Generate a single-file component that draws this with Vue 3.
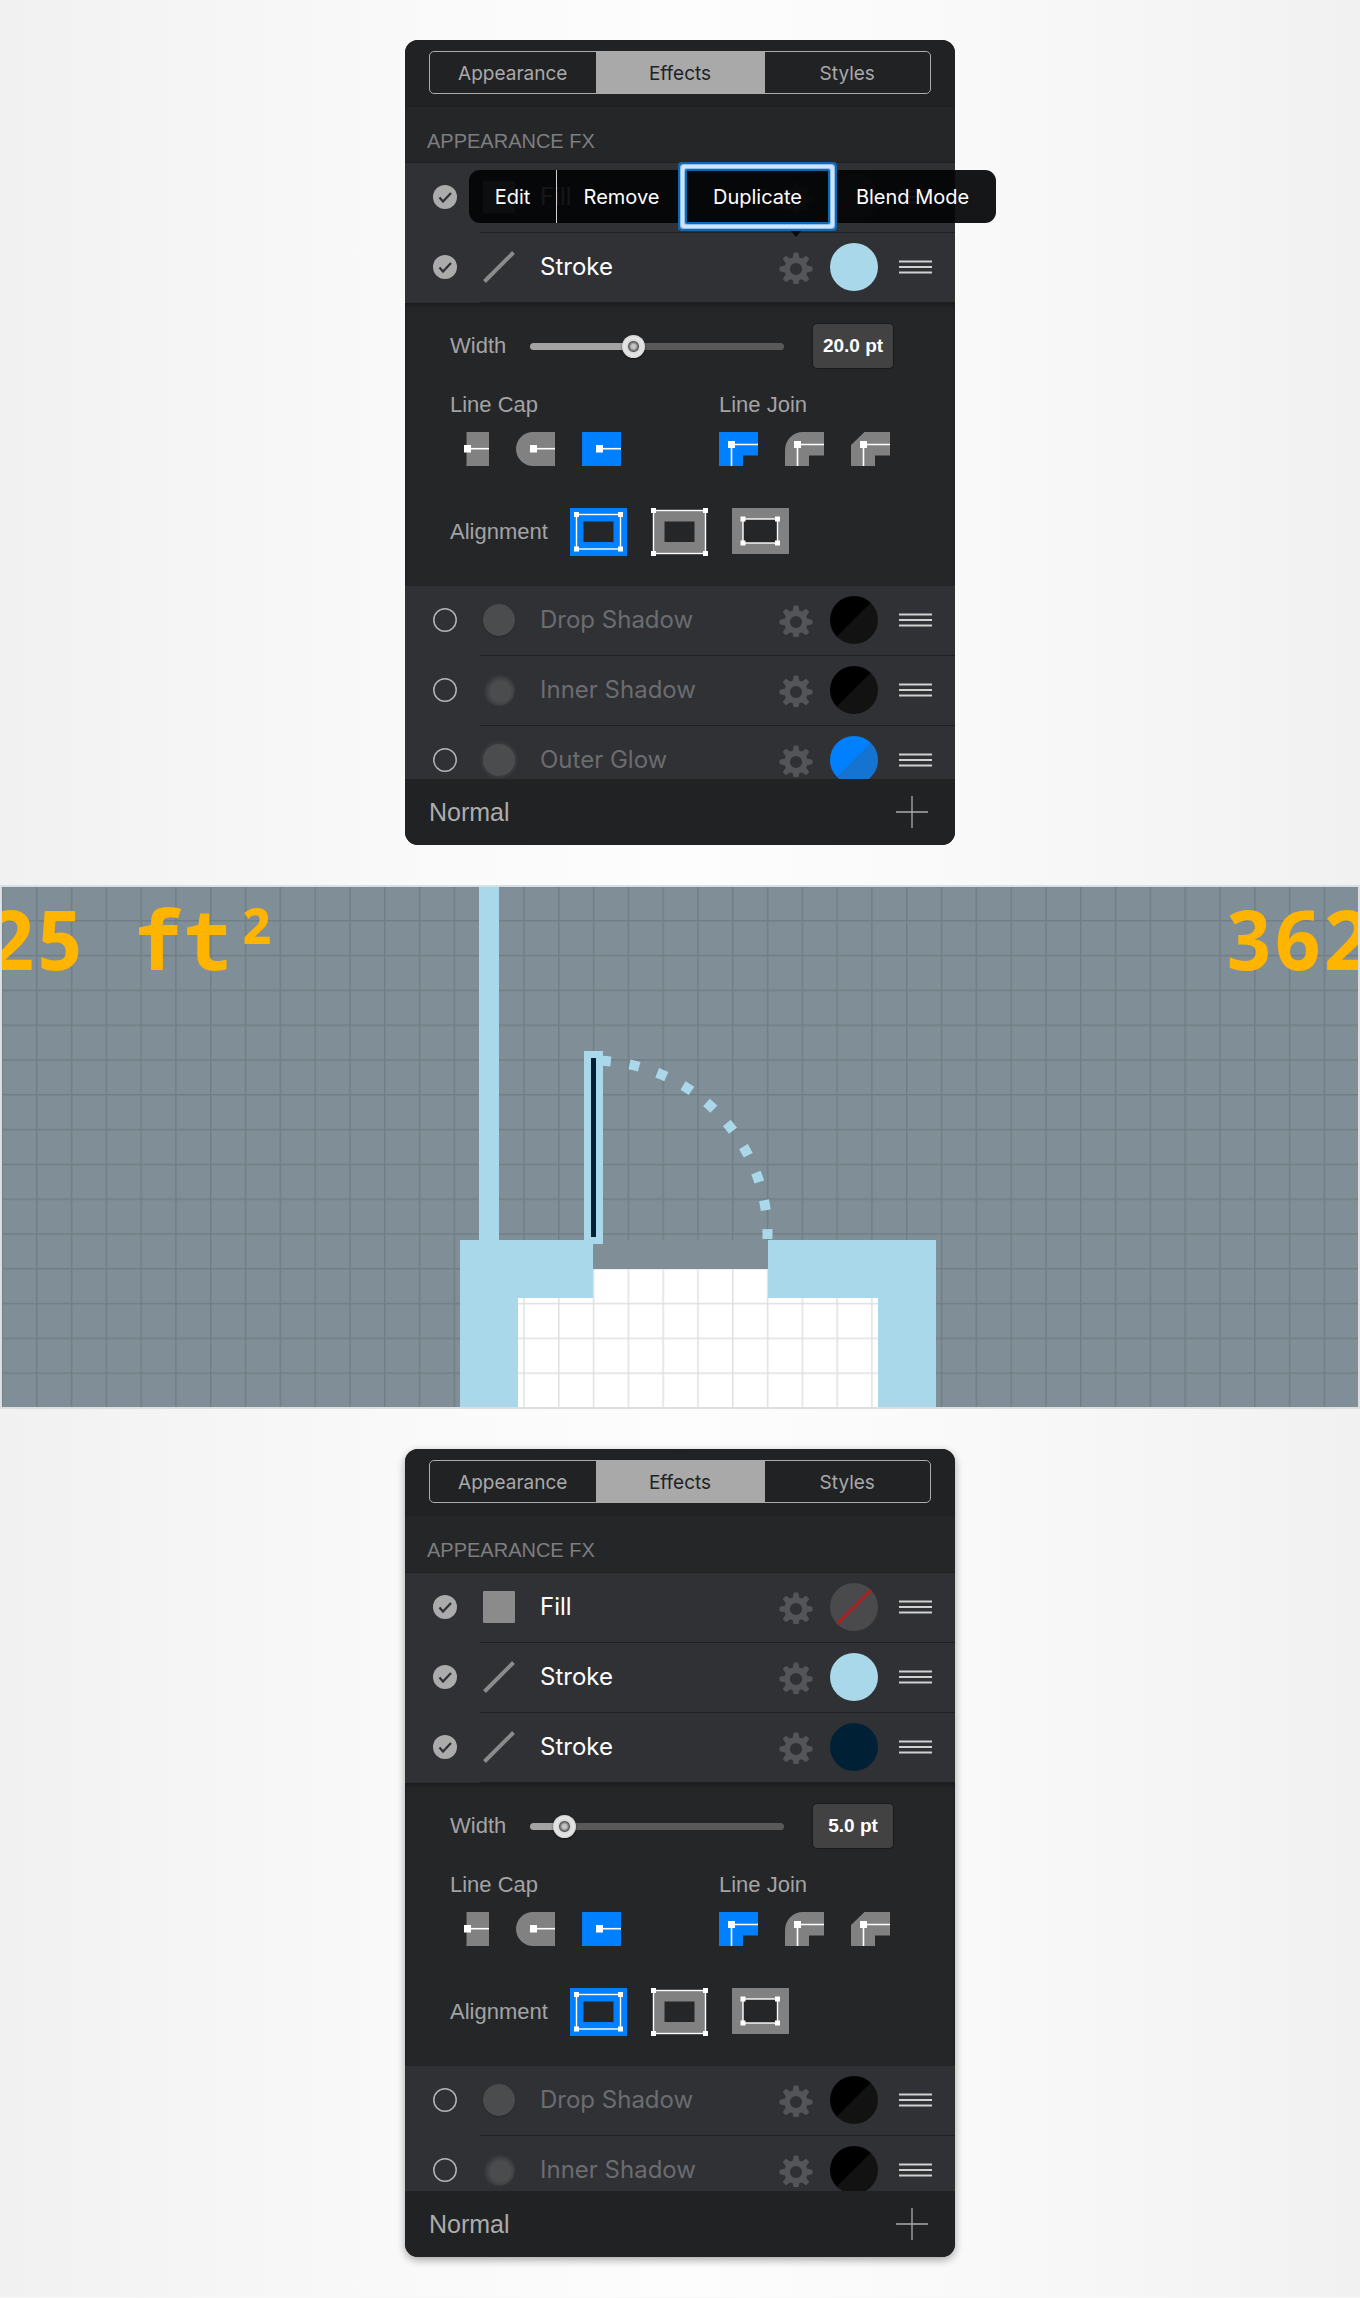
<script setup>
import { reactive } from 'vue'

const fill = { name: 'Fill', icon: 'square', on: true, swatch: 'none' }
const stroke = { name: 'Stroke', icon: 'line', on: true, swatch: 'sky' }
const darkStroke = { name: 'Stroke', icon: 'line', on: true, swatch: 'navy' }
const dropShadow = { name: 'Drop Shadow', icon: 'drop', on: false, swatch: 'black' }
const innerShadow = { name: 'Inner Shadow', icon: 'inner', on: false, swatch: 'black' }
const outerGlow = { name: 'Outer Glow', icon: 'glow', on: false, swatch: 'blue' }

const panels = reactive([
  {
    id: 'a',
    menu: true,
    viewport: 616,
    width: '20.0 pt',
    slider: 40,
    cap: 'square',
    join: 'miter',
    align: 'center',
    before: [{ ...fill }, { ...stroke }],
    after: [{ ...dropShadow }, { ...innerShadow }, { ...outerGlow }],
  },
  {
    id: 'b',
    menu: false,
    viewport: 618,
    width: '5.0 pt',
    slider: 10,
    cap: 'square',
    join: 'miter',
    align: 'center',
    before: [{ ...fill }, { ...stroke }, { ...darkStroke }],
    after: [{ ...dropShadow }, { ...innerShadow }],
  },
])

const tabs = ['Appearance', 'Effects', 'Styles']
const teeth = [0, 45, 90, 135, 180, 225, 270, 315]

const caps = [
  { id: 'butt', d: 'M16.5 0H39V34H16.5Z' },
  { id: 'round', d: 'M17 0H39V34H17A17 17 0 0 1 17 0Z' },
  { id: 'square', d: 'M0 0H39V34H0Z' },
]
const joins = [
  { id: 'miter', d: 'M0 0H39V23.5H24V34H0Z' },
  { id: 'round', d: 'M18 0H39V23.5H24V34H0V18A18 18 0 0 1 18 0Z' },
  { id: 'bevel', d: 'M13.5 0H39V23.5H24V34H0V13Z' },
]
const aligns = [
  { id: 'center', d: 'M0 0H57V48H0ZM13.5 13.5V34H43.5V13.5Z', x1: 6.5, y1: 6.5, x2: 50.5, y2: 41 },
  { id: 'inside', d: 'M2.5 2H54.5V45.5H2.5ZM13.5 13.5V34H43.5V13.5Z', x1: 2.5, y1: 2.5, x2: 54.5, y2: 45.5 },
  { id: 'outside', d: 'M0 0H57V46H0ZM11 11V35H45.5V11Z', x1: 11, y1: 11, x2: 45.5, y2: 35 },
]
</script>

<template>
  <main class="page">
    <template v-for="p in panels" :key="p.id">
      <section v-if="p.id === 'b'" class="plan" aria-label="Floor plan">
        <svg class="plan-art" viewBox="0 0 1356 520" preserveAspectRatio="xMidYMid slice">
          <defs>
            <pattern id="grid" x="34" y="33" width="34.8" height="34.8" patternUnits="userSpaceOnUse">
              <path d="M.75 0V34.8M0 .75H34.8" stroke="#000" stroke-opacity=".12" stroke-width="1.5" fill="none" />
            </pattern>
          </defs>
          <rect width="1356" height="520" fill="#808f97" />
          <rect x="591" y="382" width="175" height="40" fill="#fff" />
          <rect x="516" y="411" width="360" height="109" fill="#fff" />
          <rect width="1356" height="520" fill="url(#grid)" />
          <rect x="591" y="353" width="175" height="29" fill="#808f97" />
          <g fill="#a9d8eb">
            <rect x="477" width="20" height="354" />
            <path d="M458 353H591V411H516V520H458Z" />
            <path d="M766 353H934V520H876V411H766Z" />
            <rect x="582" y="164" width="19" height="193" />
          </g>
          <path d="M765.5 352V348A174.5 174.5 0 0 0 591 173.5" fill="none" stroke="#a9d8eb" stroke-width="10" stroke-dasharray="10 18.9" />
          <rect x="589" y="171" width="5" height="179" fill="#002135" />
          <g class="area">
            <text x="-16" y="83">25 ft<tspan dy="8">²</tspan></text>
            <text x="1222" y="83">362</text>
          </g>
        </svg>
      </section>

      <section class="panel-wrap">
        <div class="panel" :class="{ raised: !p.menu }">
          <header class="top">
            <div class="tabs">
              <button v-for="t in tabs" :key="t" type="button" class="tab" :class="{ active: t === 'Effects' }">{{ t }}</button>
            </div>
          </header>
          <h2 class="heading">APPEARANCE FX</h2>

          <div class="list" :style="{ height: p.viewport + 'px' }">
            <template v-for="group in ['before', 'after']" :key="group">
              <div v-for="(r, i) in p[group]" :key="i" class="row" :class="{ off: !r.on }">
                <label class="check">
                  <input v-model="r.on" type="checkbox" :aria-label="'Enable ' + r.name" />
                  <svg viewBox="0 0 24 24" width="24" height="24">
                    <template v-if="r.on">
                      <circle cx="12" cy="12" r="12" fill="#ababac" />
                      <path d="M6.5 12.5L10 16.5L18 8" fill="none" stroke="#303135" stroke-width="2.2" />
                    </template>
                    <circle v-else cx="12" cy="12" r="11.2" fill="none" stroke="#b5b5b6" stroke-width="1.5" />
                  </svg>
                </label>
                <div class="row-body">
                  <span class="kind" :class="r.icon">
                    <svg v-if="r.icon === 'line'" viewBox="0 0 32 32" width="32" height="32">
                      <path d="M1.5 30.5L30.5 1.5" stroke="#8b8b8c" stroke-width="4" />
                    </svg>
                  </span>
                  <span class="name">{{ r.name }}</span>
                  <button type="button" class="gear" :aria-label="r.name + ' settings'">
                    <svg viewBox="-17 -19 34 34" width="34" height="34">
                      <circle r="8.9" fill="none" stroke="#545558" stroke-width="5.6" />
                      <path v-for="a in teeth" :key="a" d="M-1.8 -16H1.8L2.8 -11H-2.8Z" :transform="`rotate(${a})`" fill="#545558" stroke="#545558" stroke-linejoin="round" />
                    </svg>
                  </button>
                  <button type="button" class="swatch" :class="r.swatch" :aria-label="r.name + ' colour'">
                    <svg v-if="r.swatch === 'none'" viewBox="0 0 48 48" width="48" height="48">
                      <path d="M7 41L41 7" stroke="#b11e1f" stroke-width="3" />
                    </svg>
                  </button>
                  <button type="button" class="handle" :aria-label="'Move ' + r.name">
                    <svg viewBox="0 0 33 14" width="33" height="14">
                      <path d="M0 1.5H33M0 7H33M0 12.5H33" stroke="#d0d0d1" stroke-width="2.2" />
                    </svg>
                  </button>
                </div>
              </div>

              <div v-if="group === 'before'" class="editor">
                <div class="width-row">
                  <label class="lbl width-lbl" :for="'width-' + p.id">Width</label>
                  <input
                    :id="'width-' + p.id"
                    v-model="p.slider"
                    class="slider"
                    type="range"
                    min="0"
                    max="100"
                    :style="{ '--fill': p.slider + '%' }"
                  />
                  <input v-model="p.width" class="value" type="text" aria-label="Width value" />
                </div>
                <div class="shape-row">
                  <fieldset class="caps">
                    <legend class="lbl">Line Cap</legend>
                    <div class="choices">
                      <label v-for="c in caps" :key="c.id" class="choice">
                        <input v-model="p.cap" type="radio" :name="'cap-' + p.id" :value="c.id" :aria-label="c.id" />
                        <svg viewBox="0 0 39 34" width="39" height="34">
                          <path class="shape" :d="c.d" />
                          <path d="M18 16.7H39" stroke="#fff" stroke-width="1.6" />
                          <rect x="14" y="13" width="7" height="7.5" fill="#fff" />
                        </svg>
                      </label>
                    </div>
                  </fieldset>
                  <fieldset>
                    <legend class="lbl">Line Join</legend>
                    <div class="choices">
                      <label v-for="j in joins" :key="j.id" class="choice">
                        <input v-model="p.join" type="radio" :name="'join-' + p.id" :value="j.id" :aria-label="j.id" />
                        <svg viewBox="0 0 39 34" width="39" height="34">
                          <path class="shape" :d="j.d" />
                          <path d="M39 12.5H12.5V34" fill="none" stroke="#fff" stroke-width="1.6" />
                          <rect x="9" y="9" width="7" height="7" fill="#fff" />
                        </svg>
                      </label>
                    </div>
                  </fieldset>
                </div>
                <div class="align-row" role="radiogroup" :aria-labelledby="'align-' + p.id">
                  <span :id="'align-' + p.id" class="lbl align-lbl">Alignment</span>
                  <label v-for="a in aligns" :key="a.id" class="choice">
                    <input v-model="p.align" type="radio" :name="'align-' + p.id" :value="a.id" :aria-label="a.id" />
                    <svg viewBox="0 0 57 48" width="57" height="48">
                      <path class="shape" :d="a.d" fill-rule="evenodd" />
                      <rect :x="a.x1" :y="a.y1" :width="a.x2 - a.x1" :height="a.y2 - a.y1" fill="none" stroke="#fff" stroke-width="1.4" />
                      <template v-for="x in [a.x1, a.x2]" :key="x">
                        <rect v-for="y in [a.y1, a.y2]" :key="y" :x="x - 2.5" :y="y - 2.5" width="5" height="5" fill="#fff" />
                      </template>
                    </svg>
                  </label>
                </div>
              </div>
            </template>
          </div>

          <footer class="bottom">
            <select class="blend" aria-label="Blend mode"><option>Normal</option></select>
            <button type="button" class="add" aria-label="Add effect">
              <svg viewBox="0 0 32 32" width="32" height="32">
                <path d="M0 16H32M16 0V32" stroke="#acacad" stroke-width="1.3" />
              </svg>
            </button>
          </footer>
        </div>

        <div v-if="p.menu" class="menu">
          <button type="button" class="item edit">Edit</button>
          <button type="button" class="item remove">Remove</button>
          <button type="button" class="item duplicate">Duplicate</button>
          <button type="button" class="item mode">Blend Mode</button>
          <span class="tip"></span>
        </div>
      </section>
    </template>
  </main>
</template>

<style>
body {
  margin: 0;
  background: #f8f8f8;
}
</style>

<style scoped>
.page {
  box-sizing: border-box;
  display: flex;
  flex-direction: column;
  align-items: center;
  gap: 40px;
  padding: 40px 0;
  overflow: hidden;
  background: linear-gradient(90deg, #f1f1f1, #f9f9f9 28%, #fdfdfd 50%, #f9f9f9 72%, #f1f1f1);
  font-family: "Liberation Sans", Arial, sans-serif;
}

button,
select,
input {
  margin: 0;
  padding: 0;
  border: 0;
  background: none;
  font: inherit;
  color: inherit;
}

svg {
  display: block;
}

.panel-wrap {
  position: relative;
  width: 550px;
}

.panel {
  overflow: hidden;
  border-radius: 13px;
  background: #252628;
}

.raised {
  box-shadow: 0 3px 9px rgba(0, 0, 0, 0.35);
}

.top {
  box-sizing: border-box;
  height: 67px;
  padding: 11px 24px 12px;
  background: #212224;
  border-bottom: 1px solid #1f2022;
}

.tabs {
  box-sizing: border-box;
  display: flex;
  height: 43px;
  overflow: hidden;
  border: 1px solid #ababab;
  border-radius: 5px;
}

.tab {
  flex: 1;
  padding-top: 1px;
  font-family: Inter, sans-serif;
  font-size: 19px;
  color: #a9a9aa;
}

.tab.active {
  flex: 0 0 169px;
  background: #a9a9a9;
  color: #212224;
}

.heading {
  box-sizing: border-box;
  height: 56px;
  margin: 0;
  padding: 21px 22px 0;
  border-bottom: 1px solid #1e1f21;
  font-size: 20px;
  font-weight: 400;
  line-height: 26px;
  color: #7d7e80;
}

.raised .heading {
  height: 57px;
}

.list {
  overflow: hidden;
}

.row {
  display: flex;
  height: 70px;
  background: #303135;
}

.check {
  position: relative;
  display: flex;
  align-items: center;
  width: 47px;
  padding: 0 0 2px 28px;
}

.check input,
.choice input {
  position: absolute;
  inset: 0;
  width: 100%;
  height: 100%;
  opacity: 0;
}

.row-body {
  display: flex;
  flex: 1;
  align-items: center;
  padding: 0 23px 1px 3px;
  border-bottom: 1px solid #1f2023;
}

.kind {
  width: 32px;
  height: 32px;
}

.square {
  border-radius: 1px;
  background: #8b8b8c;
}

.drop,
.inner,
.glow {
  border-radius: 50%;
  background: #4b4c4e;
}

.drop {
  box-shadow: 0 1px 2px rgba(0, 0, 0, 0.2);
}

.inner {
  background: radial-gradient(circle at 55% 55%, #4b4c4e 40%, #303135 70%);
}

.glow {
  box-shadow: 0 0 5px #4b4c4e;
}

.name {
  flex: 1;
  padding-left: 25px;
  font-family: Inter, sans-serif;
  font-size: 24px;
  line-height: 30px;
  color: #fff;
}

.off .name {
  color: #6b6c6f;
}

.gear {
  margin-right: 17px;
}

.swatch {
  width: 48px;
  height: 48px;
  margin-right: 21px;
  border-radius: 50%;
}

.swatch.none {
  background: #4a4a4c;
}

.swatch.sky {
  background: #a9d8eb;
}

.swatch.navy {
  background: #002135;
}

.swatch.black {
  background: linear-gradient(135deg, #000 50%, #121212 50%);
}

.swatch.blue {
  background: linear-gradient(135deg, #0080ff 50%, #1573d2 50%);
}

.editor {
  padding: 20px 60px 30px 45px;
  box-shadow: inset 0 3px 4px -1px rgba(0, 0, 0, 0.35);
}

.lbl {
  padding: 0;
  font-size: 22px;
  line-height: 26px;
  color: #a3a3a4;
}

.width-row {
  display: flex;
  align-items: center;
}

.width-lbl {
  width: 80px;
}

.slider {
  width: 254px;
  height: 24px;
  margin-right: 28px;
  appearance: none;
}

.slider::-webkit-slider-runnable-track {
  height: 7px;
  border-radius: 4px;
  background: linear-gradient(90deg, #a3a3a3 var(--fill), #59595a var(--fill));
}

.slider::-webkit-slider-thumb {
  width: 23px;
  height: 23px;
  margin-top: -8px;
  border-radius: 50%;
  background: radial-gradient(circle, #c4c4c4 0 2px, #5b5b5b 5px, #d8d8d8 6px, #e6e6e6 9px, #cfcfcf 12px);
  box-shadow: 0 1px 2px rgba(0, 0, 0, 0.6);
  appearance: none;
}

.value {
  box-sizing: border-box;
  width: 82px;
  height: 46px;
  border: 1px solid #191a1b;
  border-radius: 5px;
  background: #424243;
  font-size: 19px;
  font-weight: 700;
  text-align: center;
  color: #fff;
}

.shape-row {
  display: flex;
  margin-top: 23px;
}

fieldset {
  min-width: 0;
  margin: 0;
  padding: 0;
  border: 0;
}

.caps {
  width: 269px;
}

.choices {
  display: flex;
  gap: 27px;
  padding-top: 14px;
}

.choice {
  position: relative;
}

.shape {
  fill: #818181;
}

.choice input:checked + svg .shape {
  fill: #0080ff;
}

.align-row {
  display: flex;
  align-items: center;
  gap: 24px;
  margin-top: 42px;
}

.align-lbl {
  width: 96px;
}

.bottom {
  display: flex;
  align-items: center;
  justify-content: space-between;
  height: 66px;
  padding: 0 27px 0 24px;
  background: #212224;
}

.blend {
  appearance: none;
  font-size: 25px;
  line-height: 30px;
  color: #acacad;
}

.menu {
  position: absolute;
  top: 130px;
  left: 64px;
  box-sizing: border-box;
  display: flex;
  width: 527px;
  height: 53px;
  border-radius: 11px;
  background: rgba(3, 4, 6, 0.93);
  font-family: Inter, sans-serif;
  font-size: 20px;
  color: #fff;
}

.edit {
  width: 88px;
  border-right: 1px solid #d0d0d0;
}

.remove {
  width: 129px;
}

.duplicate {
  width: 143px;
  border-radius: 1px;
  box-shadow:
    inset 0 0 0 1px #1268ad,
    0 0 0 1px #1268ad,
    0 0 0 2px #8dc0f0,
    0 0 0 5px #cfe5fd,
    0 0 0 6px #8dc0f0,
    0 0 0 8px #1268ad;
}

.mode {
  flex: 1;
}

.tip {
  position: absolute;
  top: 61px;
  left: 322px;
  border: 5px solid transparent;
  border-top: 6px solid #08090a;
  border-bottom: 0;
}

.plan {
  box-sizing: border-box;
  width: 100%;
  border: 2px solid #d9dfe3;
}

.plan-art {
  width: 100%;
  height: 520px;
}

.area {
  fill: #ffb400;
  font-family: "Noto Sans Mono", "DejaVu Sans Mono", monospace;
  font-size: 82px;
  font-weight: 700;
}
</style>
